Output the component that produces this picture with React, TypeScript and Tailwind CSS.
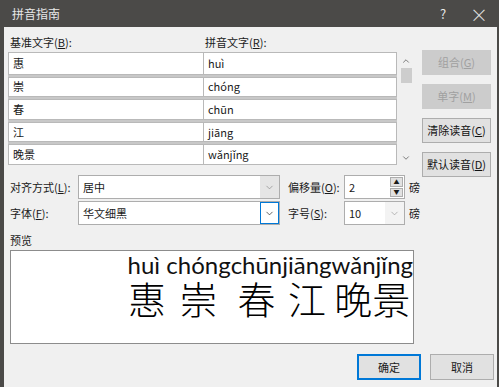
import { ChevronDown, ChevronUp } from "lucide-react";

const rows = [
  ["惠", "huì"],
  ["崇", "chóng"],
  ["春", "chūn"],
  ["江", "jiāng"],
  ["晚景", "wǎnjǐng"],
];

const ruby = [
  { py: "huì\u00a0", hz: "惠" },
  { py: "chóng", hz: "崇" },
  { py: "chūn", hz: "春" },
  { py: "jiāng", hz: "江" },
  { py: "wǎnjǐng", hz: "晚景" },
];

function Label({ text, k, tail = "" }: { text: string; k: string; tail?: string }) {
  return (
    <span className="whitespace-nowrap">
      {text}(<u>{k}</u>){tail}
    </span>
  );
}

function Select({ value, w, focus }: { value: string; w: string; focus?: boolean }) {
  return (
    <div className={`flex h-[24px] ${w} border border-[#adadad] bg-white`}>
      <div className="flex flex-1 items-center pl-[4px]">{value}</div>
      <div
        className={`flex w-[19px] items-center justify-center ${
          focus ? "border border-[#0078d7] bg-white" : "bg-[#e5e5e5]"
        }`}
      >
        <ChevronDown size={11} strokeWidth={1.5} className={focus ? "text-[#222]" : "text-[#888]"} />
      </div>
    </div>
  );
}

function SideButton({ label, k, disabled }: { label: string; k: string; disabled?: boolean }) {
  return (
    <div
      className={`flex h-[25px] w-[69px] items-center justify-center border ${
        disabled ? "border-[#cccccc] bg-[#cccccc] text-[#a0a0a0]" : "border-[#adadad] bg-[#e1e1e1] text-[#111]"
      }`}
    >
      <Label text={label} k={k} />
    </div>
  );
}

export default function App() {
  return (
    <div
      className="flex h-[387px] w-[499px] flex-col overflow-hidden border-l-[4px] border-r-[2px] border-[#4b4a48] bg-[#f0f0f0] text-[11px] leading-[15px] text-[#1a1a1a]"
      style={{ fontFamily: '"Noto Sans CJK SC", "Liberation Sans", sans-serif' }}
    >
      {/* title bar */}
      <div className="flex h-[27px] shrink-0 items-center bg-[#4b4a48] pl-[8px] text-[12px] text-[#e8e8e8]">
        <span className="flex-1">拼音指南</span>
        <span className="w-[20px] text-center text-[13px]">?</span>
        <span className="ml-[16px] mr-[8px] w-[20px] text-center text-[18px] font-light leading-none">×</span>
      </div>

      <div className="flex flex-col pl-[4px]">
        {/* top: grid + side buttons */}
        <div className="flex h-[138px] items-start">
          <div className="flex flex-col">
            <div className="flex h-[25px] items-end pb-[2px] pl-[2px]">
              <div className="w-[195px]">
                <Label text="基准文字" k="B" tail=":" />
              </div>
              <Label text="拼音文字" k="R" tail=":" />
            </div>
            <div className="flex">
              <div className="flex w-[389px] flex-col">
                {rows.map(([a, b], i) => (
                  <div key={a} className={`flex h-[22.6px] ${i > 0 ? "border-t-2 border-[#c8c8c8]" : ""}`}>
                    <div className="flex w-[196px] items-center border border-[#b9b9b9] bg-white pl-[4px]">{a}</div>
                    <div className="flex flex-1 items-center border border-l-0 border-[#b9b9b9] bg-white pl-[4px]">{b}</div>
                  </div>
                ))}
              </div>
              <div className="ml-[2px] flex w-[14px] flex-col items-center">
                <ChevronUp size={10} strokeWidth={2} className="mt-[4px] text-[#666]" />
                <div className="mt-[2px] h-[15px] w-[11px] bg-[#cdcdcd]" />
                <div className="flex-1" />
                <ChevronDown size={10} strokeWidth={2} className="mb-[2px] text-[#666]" />
              </div>
            </div>
          </div>
          <div className="ml-[9px] flex flex-col pt-[23px]">
            <SideButton label="组合" k="G" disabled />
            <div className="mt-[9px]">
              <SideButton label="单字" k="M" disabled />
            </div>
            <div className="mt-[9px]">
              <SideButton label="清除读音" k="C" />
            </div>
            <div className="mt-[9px]">
              <SideButton label="默认读音" k="D" />
            </div>
          </div>
        </div>

        {/* options */}
        <div className="mt-[10px] flex flex-col gap-[2px]">
          <div className="flex items-center">
            <div className="w-[70px] pl-[2px]">
              <Label text="对齐方式" k="L" tail=":" />
            </div>
            <Select value="居中" w="w-[202px]" />
            <div className="w-[64px] pl-[8px]">
              <Label text="偏移量" k="O" tail=":" />
            </div>
            <div className="flex h-[24px] w-[61px] border border-[#adadad] bg-white">
              <div className="flex flex-1 items-center pl-[4px]">2</div>
              <div className="flex w-[15px] flex-col gap-[1px] p-[1px]">
                <div className="flex flex-1 items-center justify-center border border-[#adadad] bg-[#e1e1e1] text-[6px] leading-none">▲</div>
                <div className="flex flex-1 items-center justify-center border border-[#adadad] bg-[#e1e1e1] text-[6px] leading-none">▼</div>
              </div>
            </div>
            <span className="ml-[4px]">磅</span>
          </div>
          <div className="flex items-center">
            <div className="w-[70px] pl-[2px]">
              <Label text="字体" k="F" tail=":" />
            </div>
            <Select value="华文细黑" w="w-[202px]" focus />
            <div className="w-[64px] pl-[8px]">
              <Label text="字号" k="S" tail=":" />
            </div>
            <div className="flex h-[24px] w-[61px] border border-[#adadad] bg-white">
              <div className="flex flex-1 items-center pl-[4px]">10</div>
              <div className="flex w-[19px] items-center justify-center bg-[#f3f3f3]">
                <ChevronDown size={11} strokeWidth={1.5} className="text-[#999]" />
              </div>
            </div>
            <span className="ml-[4px]">磅</span>
          </div>
        </div>

        {/* preview */}
        <div className="mt-[8px] pl-[2px]">预览</div>
        <div className="ml-[2px] mt-[2px] flex h-[94px] w-[404px] justify-end border border-[#8c8c8c] bg-white pt-[2px]">
          <div className="flex">
            {ruby.map((r) => (
              <div key={r.py} className="flex flex-col items-center">
                <span
                  className="whitespace-pre text-[24px] leading-[24px] text-[#111]"
                  style={{ fontFamily: 'Lato, "DejaVu Sans", sans-serif' }}
                >
                  {r.py}
                </span>
                <span className="text-[38px] font-light leading-[42px] text-black">{r.hz}</span>
              </div>
            ))}
          </div>
        </div>

        {/* footer */}
        <div className="mt-[10px] flex justify-end gap-[9px] pr-[3px]">
          <div className="flex h-[26px] w-[64px] items-center justify-center border-2 border-[#0078d7] bg-[#e1e1e1]">确定</div>
          <div className="flex h-[26px] w-[64px] items-center justify-center border border-[#adadad] bg-[#e1e1e1]">取消</div>
        </div>
      </div>
    </div>
  );
}
